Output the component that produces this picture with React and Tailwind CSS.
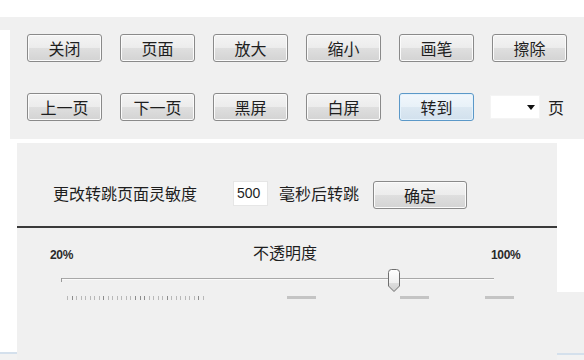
import React from "react";

const cjk = { fontFamily: '"Noto Sans CJK SC", "Noto Sans", sans-serif' };
const latin = { fontFamily: '"Liberation Sans", "DejaVu Sans", sans-serif' };

function WinButton({ label, focused = false, className = "" }) {
    return (
        <button
            style={cjk}
            className={`h-[28px] rounded-[3px] border text-[16px] leading-none text-[#1e1e1e] ${
                focused
                    ? "border-[#5b98c8] bg-[linear-gradient(#f1f7fc_0%,#e8f1f8_50%,#dce8f2_50%,#d2e1ed_100%)] shadow-[inset_0_0_0_1px_#e4f2fc]"
                    : "border-[#8a8a8a] bg-[linear-gradient(#f4f4f4_0%,#ececec_50%,#dfdfdf_50%,#d3d3d3_100%)] shadow-[inset_0_0_0_1px_#fbfbfb]"
            } ${className}`}
        >
            {label}
        </button>
    );
}

const row1 = ["关闭", "页面", "放大", "缩小", "画笔", "擦除"];
const row2 = ["上一页", "下一页", "黑屏", "白屏"];

export default function App() {
    return (
        <div className="w-[584px] h-[360px] bg-white overflow-hidden">
            {/* white band at the very top */}
            <div className="h-[17px] bg-white" />

            {/* top toolbar panel */}
            <div className="h-[122px] bg-[#f0f0f0] pt-[13px]">
                <div className="flex h-full">
                    <div className="w-[10px] bg-white" />
                    <div className="flex-1 pl-[17px] pt-[4px]">
                        <div className="grid grid-cols-[repeat(6,75px)] gap-x-[18px]">
                            {row1.map((t) => (
                                <WinButton key={t} label={t} />
                            ))}
                        </div>
                        <div className="grid grid-cols-[repeat(5,75px)_auto] gap-x-[18px] mt-[31px] items-center">
                            {row2.map((t) => (
                                <WinButton key={t} label={t} />
                            ))}
                            <WinButton label="转到" focused />
                            <div className="flex items-center -ml-[2px]">
                                <div className="w-[50px] h-[24px] bg-white border border-[#f4f4f4] flex items-center justify-end pr-[4px]">
                                    <svg width="8" height="5" viewBox="0 0 8 5">
                                        <path d="M0 0 H8 L4 5 Z" fill="#111" />
                                    </svg>
                                </div>
                                <span style={cjk} className="ml-[8px] text-[16px] text-[#1e1e1e] leading-none">页</span>
                            </div>
                        </div>
                    </div>
                </div>
            </div>

            <div className="h-[4px]" />

            {/* lower area */}
            <div className="flex h-[217px]">
                <div className="w-[17px] flex flex-col">
                    <div className="h-[209px] bg-white" />
                    <div className="h-[2px] bg-[#d4e0ec]" />
                    <div className="flex-1 bg-[#f2f2f2]" />
                </div>

                {/* settings panel */}
                <div className="w-[540px] bg-[#f0f0f0] pt-[36px]">
                    <div className="flex items-center h-[28px] pl-[36px]">
                        <span style={cjk} className="text-[16px] text-[#1e1e1e] leading-none">更改转跳页面灵敏度</span>
                        <div className="ml-[36px] w-[35px] h-[25px] bg-white border border-[#e6e6e6] flex items-center pl-[3px]">
                            <span style={latin} className="text-[14px] text-[#1e1e1e] leading-none">500</span>
                        </div>
                        <span style={cjk} className="ml-[11px] text-[16px] text-[#1e1e1e] leading-none">毫秒后转跳</span>
                        <WinButton label="确定" className="ml-[14px] w-[94px] h-[26px] mt-[4px]" />
                    </div>

                    <div className="mt-[19px] h-[2px] bg-[#3a3a3a]" />

                    {/* opacity labels */}
                    <div className="flex items-start pl-[33px] mt-[14px] h-[20px]">
                        <span style={latin} className="w-[203px] mt-[6px] text-[12px] leading-[14px] font-bold text-[#2a2a2a] tracking-[-0.3px]">20%</span>
                        <span style={cjk} className="w-[238px] text-[16px] leading-[20px] text-[#1e1e1e]">不透明度</span>
                        <span style={latin} className="mt-[6px] text-[12px] leading-[14px] font-bold text-[#2a2a2a] tracking-[-0.3px]">100%</span>
                    </div>

                    {/* slider */}
                    <div className="ml-[44px] mt-[16px] w-[433px] relative">
                        <div className="h-[1px] bg-[#a8a8a8]" />
                        <div className="h-[1px] bg-[#fafafa]" />
                        <div className="absolute left-0 top-0 w-[1px] h-[4px] bg-[#9a9a9a]" />
                        <svg
                            className="absolute left-[326px] top-[-9px]"
                            width="14"
                            height="24"
                            viewBox="0 0 14 24"
                        >
                            <defs>
                                <linearGradient id="thumb" x1="0" y1="0" x2="0" y2="1">
                                    <stop offset="0" stopColor="#ffffff" />
                                    <stop offset="0.6" stopColor="#f0f0f0" />
                                    <stop offset="0.6" stopColor="#dedede" />
                                    <stop offset="1" stopColor="#d0d0d0" />
                                </linearGradient>
                            </defs>
                            <path
                                d="M1.5 3.5 Q1.5 0.5 4.5 0.5 H9.5 Q12.5 0.5 12.5 3.5 V17 L7 22.5 L1.5 17 Z"
                                fill="url(#thumb)"
                                stroke="#6e6e6e"
                                strokeWidth="1"
                            />
                        </svg>
                    </div>

                    {/* tick marks */}
                    <div className="flex items-start pl-[50px] mt-[16px]">
                        <div className="w-[137px] h-[4px] flex justify-between">
                            {Array.from({ length: 31 }).map((_, i) => (
                                <div
                                    key={i}
                                    className={`w-[1px] h-[4px] ${
                                        i % 7 === 1 || i === 16 || i === 17 ? "bg-[#8c8c8c]" : "bg-[#b8b8b8]"
                                    }`}
                                />
                            ))}
                        </div>
                        <div className="ml-[83px] w-[29px] h-[3px] bg-[#c4c4c4]" />
                        <div className="ml-[84px] w-[29px] h-[3px] bg-[#c4c4c4]" />
                        <div className="ml-[56px] w-[29px] h-[3px] bg-[#c4c4c4]" />
                    </div>
                </div>

                <div className="flex-1 flex flex-col">
                    <div className="h-[149px] bg-white" />
                    <div className="h-[61px] bg-[#f0f0f0]" />
                    <div className="h-[2px] bg-[#d4e0ec]" />
                    <div className="flex-1 bg-[#f2f2f2]" />
                </div>
            </div>
        </div>
    );
}
